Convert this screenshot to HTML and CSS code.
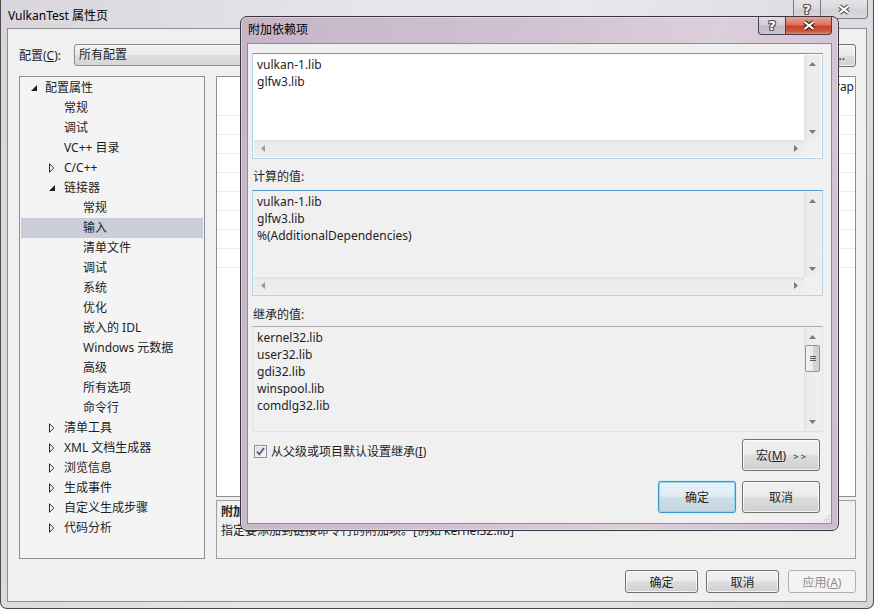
FILE: index.html
```html
<!DOCTYPE html>
<html lang="zh-CN">
<head>
<meta charset="utf-8">
<title>VulkanTest 属性页</title>
<link rel="stylesheet" href="styles.css">
</head>
<body>
<div class="desk">
  <section class="window main-win">
    <header class="titlebar">
      <span class="title">VulkanTest 属性页</span>
      <div class="caps inactive">
        <span class="cap help"><span class="q">?</span></span>
        <span class="cap close">
          <svg width="14" height="11" viewBox="0 0 14 11"><path d="M2.5 2 L11.5 9 M11.5 2 L2.5 9" stroke="#5a5a5a" stroke-width="4.2"/><path d="M2.5 2 L11.5 9 M11.5 2 L2.5 9" stroke="#fff" stroke-width="2.2"/></svg>
        </span>
      </div>
    </header>
    <div class="client">
      <div class="config-row">
        <span class="lbl">配置(<u>C</u>):</span>
        <div class="combo cfg">所有配置</div>
        <span class="lbl plat">平台(<u>P</u>):</span>
        <div class="combo plat-combo">活动(x64)</div>
        <button class="btn mgr">配置管理器(<u>O</u>)...</button>
      </div>
      <div class="main">
        <div class="tree">
          <div class="row l0"><span class="arw"><svg width="6" height="6" viewBox="0 0 6 6"><path d="M6 0 L6 6 L0 6Z" fill="#1e1e1e"/></svg></span>配置属性</div>
          <div class="row l1"><span class="arw"></span>常规</div>
          <div class="row l1"><span class="arw"></span>调试</div>
          <div class="row l1"><span class="arw"></span>VC++ 目录</div>
          <div class="row l1"><span class="arw"><svg width="6" height="10" viewBox="0 0 6 10"><path d="M0.5 0.8 L4.8 5 L0.5 9.2Z" fill="#fff" stroke="#222" stroke-width="1"/></svg></span>C/C++</div>
          <div class="row l1"><span class="arw"><svg width="6" height="6" viewBox="0 0 6 6"><path d="M6 0 L6 6 L0 6Z" fill="#1e1e1e"/></svg></span>链接器</div>
          <div class="row l2"><span class="arw"></span>常规</div>
          <div class="row l2 sel"><span class="arw"></span>输入</div>
          <div class="row l2"><span class="arw"></span>清单文件</div>
          <div class="row l2"><span class="arw"></span>调试</div>
          <div class="row l2"><span class="arw"></span>系统</div>
          <div class="row l2"><span class="arw"></span>优化</div>
          <div class="row l2"><span class="arw"></span>嵌入的 IDL</div>
          <div class="row l2"><span class="arw"></span>Windows 元数据</div>
          <div class="row l2"><span class="arw"></span>高级</div>
          <div class="row l2"><span class="arw"></span>所有选项</div>
          <div class="row l2"><span class="arw"></span>命令行</div>
          <div class="row l1"><span class="arw"><svg width="6" height="10" viewBox="0 0 6 10"><path d="M0.5 0.8 L4.8 5 L0.5 9.2Z" fill="#fff" stroke="#222" stroke-width="1"/></svg></span>清单工具</div>
          <div class="row l1"><span class="arw"><svg width="6" height="10" viewBox="0 0 6 10"><path d="M0.5 0.8 L4.8 5 L0.5 9.2Z" fill="#fff" stroke="#222" stroke-width="1"/></svg></span>XML 文档生成器</div>
          <div class="row l1"><span class="arw"><svg width="6" height="10" viewBox="0 0 6 10"><path d="M0.5 0.8 L4.8 5 L0.5 9.2Z" fill="#fff" stroke="#222" stroke-width="1"/></svg></span>浏览信息</div>
          <div class="row l1"><span class="arw"><svg width="6" height="10" viewBox="0 0 6 10"><path d="M0.5 0.8 L4.8 5 L0.5 9.2Z" fill="#fff" stroke="#222" stroke-width="1"/></svg></span>生成事件</div>
          <div class="row l1"><span class="arw"><svg width="6" height="10" viewBox="0 0 6 10"><path d="M0.5 0.8 L4.8 5 L0.5 9.2Z" fill="#fff" stroke="#222" stroke-width="1"/></svg></span>自定义生成步骤</div>
          <div class="row l1"><span class="arw"><svg width="6" height="10" viewBox="0 0 6 10"><path d="M0.5 0.8 L4.8 5 L0.5 9.2Z" fill="#fff" stroke="#222" stroke-width="1"/></svg></span>代码分析</div>
        </div>
        <div class="right">
          <div class="grid">
            <div class="grow first"><span class="gval">Wrap</span></div>
            <div class="grow"></div>
            <div class="grow"></div>
            <div class="grow"></div>
            <div class="grow"></div>
            <div class="grow"></div>
            <div class="grow"></div>
            <div class="grow"></div>
            <div class="grow"></div>
          </div>
          <div class="desc">
            <div class="dtitle">附加依赖项</div>
            <div class="dtext">指定要添加到链接命令行的附加项。[例如 kernel32.lib]</div>
          </div>
        </div>
      </div>
      <div class="footer">
        <button class="btn fbtn">确定</button>
        <button class="btn fbtn">取消</button>
        <button class="btn fbtn apply" disabled>应用(<u>A</u>)</button>
      </div>
    </div>
  </section>

  <section class="window dialog">
    <header class="titlebar dlg-title">
      <span class="title">附加依赖项</span>
      <div class="caps active">
        <span class="cap help"><span class="q">?</span></span>
        <span class="cap close red">
          <svg width="14" height="11" viewBox="0 0 14 11"><path d="M2.5 2 L11.5 9 M11.5 2 L2.5 9" stroke="#3a2420" stroke-width="4.2"/><path d="M2.5 2 L11.5 9 M11.5 2 L2.5 9" stroke="#fff" stroke-width="2.2"/></svg>
        </span>
      </div>
    </header>
    <div class="client dlg-client">
      <div class="tbox focus white">
        <div class="tb-text">vulkan-1.lib<br>glfw3.lib</div>
        <div class="vsb">
          <span class="sarw"><svg width="7" height="4" viewBox="0 0 7 4"><path d="M3.5 0 L7 4 L0 4Z" fill="#7a7a7a"/></svg></span>
          <span class="sfill"></span>
          <span class="sarw"><svg width="7" height="4" viewBox="0 0 7 4"><path d="M0 0 L7 0 L3.5 4Z" fill="#7a7a7a"/></svg></span>
        </div>
        <div class="hsb">
          <span class="sarw"><svg width="4" height="7" viewBox="0 0 4 7"><path d="M0 3.5 L4 0 L4 7Z" fill="#9a9a9a"/></svg></span>
          <span class="sfill"></span>
          <span class="sarw"><svg width="4" height="7" viewBox="0 0 4 7"><path d="M4 3.5 L0 0 L0 7Z" fill="#7a7a7a"/></svg></span>
        </div>
        <div class="corner"></div>
      </div>
      <div class="dlabel">计算的值:</div>
      <div class="tbox focus">
        <div class="tb-text">vulkan-1.lib<br>glfw3.lib<br>%(AdditionalDependencies)</div>
        <div class="vsb">
          <span class="sarw"><svg width="7" height="4" viewBox="0 0 7 4"><path d="M3.5 0 L7 4 L0 4Z" fill="#7a7a7a"/></svg></span>
          <span class="sfill"></span>
          <span class="sarw"><svg width="7" height="4" viewBox="0 0 7 4"><path d="M0 0 L7 0 L3.5 4Z" fill="#7a7a7a"/></svg></span>
        </div>
        <div class="hsb">
          <span class="sarw"><svg width="4" height="7" viewBox="0 0 4 7"><path d="M0 3.5 L4 0 L4 7Z" fill="#9a9a9a"/></svg></span>
          <span class="sfill"></span>
          <span class="sarw"><svg width="4" height="7" viewBox="0 0 4 7"><path d="M4 3.5 L0 0 L0 7Z" fill="#7a7a7a"/></svg></span>
        </div>
        <div class="corner"></div>
      </div>
      <div class="dlabel second">继承的值:</div>
      <div class="tbox plain single">
        <div class="tb-text">kernel32.lib<br>user32.lib<br>gdi32.lib<br>winspool.lib<br>comdlg32.lib</div>
        <div class="vsb">
          <span class="sarw"><svg width="7" height="4" viewBox="0 0 7 4"><path d="M3.5 0 L7 4 L0 4Z" fill="#7a7a7a"/></svg></span>
          <span class="thumb"><i></i><i></i><i></i></span>
          <span class="sfill"></span>
          <span class="sarw"><svg width="7" height="4" viewBox="0 0 7 4"><path d="M0 0 L7 0 L3.5 4Z" fill="#7a7a7a"/></svg></span>
        </div>
      </div>
      <div class="dlg-row1">
        <label class="chk">
          <span class="box"><svg width="11" height="11" viewBox="0 0 11 11"><path d="M2 5.5 L4.3 8.3 L9 2" fill="none" stroke="#4b5d86" stroke-width="1.8"/></svg></span>
          <span>从父级或项目默认设置继承(<u>I</u>)</span>
        </label>
        <button class="btn dbtn">宏(<u>M</u>) <span class="gg">&gt; &gt;</span></button>
      </div>
      <div class="dlg-row2">
        <button class="btn dbtn default">确定</button>
        <button class="btn dbtn">取消</button>
      </div>
      <span class="grip"><svg width="9" height="9" viewBox="0 0 9 9"><path d="M8 1 L1 8 M8 4 L4 8 M8 7 L7 8" stroke="#9a9a9a" stroke-width="1" stroke-dasharray="1 1"/></svg></span>
    </div>
  </section>
</div>
</body>
</html>
```

FILE: styles.css
```css
* { box-sizing: border-box; }
html, body { margin: 0; padding: 0; }
body {
  width: 874px;
  height: 609px;
  overflow: hidden;
  background: #ffffff;
  font-family: "Noto Sans", "Noto Sans CJK SC", sans-serif;
  font-size: 12px;
  color: #1e1e1e;
}
u { text-decoration: underline; text-underline-offset: 1px; }
button { font: inherit; color: inherit; }

.desk { position: relative; width: 874px; height: 609px; }

/* ---------- generic window frame ---------- */
.window {
  display: flex;
  flex-direction: column;
}
.titlebar {
  display: flex;
  align-items: flex-start;
  justify-content: space-between;
  flex: none;
}
.title { white-space: nowrap; color: #000; }
.caps { display: flex; }
.cap {
  display: flex;
  align-items: center;
  justify-content: center;
  height: 19px;
  border: 1px solid #7b7b82;
  border-top: none;
}
.cap.help { width: 27px; border-radius: 0 0 0 4px; border-right: none; }
.cap.close { width: 48px; border-radius: 0 0 4px 0; }
.q {
  font-family: "DejaVu Sans", sans-serif;
  font-weight: bold;
  font-size: 13px;
  line-height: 13px;
  color: #fff;
  text-shadow: 1px 0 #555, -1px 0 #555, 0 1px #555, 0 -1px #555, 1px 1px #555, -1px -1px #555, 1px -1px #555, -1px 1px #555;
}
.inactive .cap {
  background: linear-gradient(#e6e4e8 0%, #dddade 45%, #d2cfd4 55%, #dcd9de 100%);
}

/* ---------- main window ---------- */
.main-win {
  width: 874px;
  height: 609px;
  padding: 0 6px 6px 6px;
  border: 1px solid #4c4c50;
  border-top: none;
  border-radius: 0 0 7px 7px;
  background: linear-gradient(100deg, #d8d6da 0%, #e6e4e8 35%, #e9e7eb 60%, #d9d6db 100%);
}
.main-win .titlebar { height: 28px; }
.main-win .title { margin: 8px 0 0 1px; line-height: 16px; }
.main-win .caps { margin-right: -1px; }

.client {
  flex: 1;
  border: 1px solid #8e8c93;
  background: #f0f0f0;
  display: flex;
  flex-direction: column;
  padding: 15px 10px 0 11px;
}

.config-row {
  display: flex;
  align-items: center;
  height: 22px;
  flex: none;
}
.lbl { width: 55px; white-space: nowrap; }
.lbl.plat { width: auto; margin: 0 10px 0 24px; }
.combo {
  height: 22px;
  border: 1px solid #8c8c8c;
  border-radius: 3px;
  background: linear-gradient(#f3f3f3 0%, #ececec 50%, #dfdfdf 50%, #d6d6d6 100%);
  padding: 0 4px;
  line-height: 20px;
}
.combo.cfg { width: 340px; }
.combo.plat-combo { width: 200px; }
.btn {
  border: 1px solid #707070;
  border-radius: 3px;
  background: linear-gradient(#f2f2f2 0%, #ebebeb 48%, #dddddd 52%, #cfcfcf 100%);
  box-shadow: inset 0 0 0 1px rgba(255,255,255,0.75);
  padding: 0;
  text-align: center;
  white-space: nowrap;
  cursor: default;
}
.btn.mgr { margin-left: auto; height: 23px; width: 118px; padding-right: 10px; text-align: right; }

.main {
  display: flex;
  gap: 11px;
  margin-top: 10px;
  height: 483px;
  flex: none;
}
.tree {
  width: 186px;
  flex: none;
  border: 1px solid #8b8e96;
  background: #f4f4f4;
  padding: 1px 1px 0 1px;
}
.row {
  height: 20px;
  line-height: 20px;
  display: flex;
  align-items: center;
  white-space: nowrap;
  color: #1e1e1e;
}
.row.l0 { padding-left: 8px; }
.row.l1 { padding-left: 26px; }
.row.l2 { padding-left: 45px; }
.row.sel { background: #cbcdd9; }
.arw {
  width: 17px;
  height: 20px;
  flex: none;
  display: flex;
  align-items: center;
  padding-left: 2px;
}
.l0 .arw { width: 16px; }

.right {
  flex: 1;
  display: flex;
  flex-direction: column;
  gap: 3px;
}
.grid {
  height: 421px;
  border: 1px solid #8b8e96;
  background: #fff;
  overflow: hidden;
}
.grow {
  height: 19px;
  display: flex;
  border-bottom: 1px solid #ececec;
  line-height: 19px;
  white-space: nowrap;
}
.grow.first { height: 39px; }
.gval { flex: 1; text-align: right; padding-right: 1px; }
.desc {
  height: 59px;
  border: 1px solid #a0a0a0;
  background: #f0f0f0;
  padding: 2px 4px;
}
.dtitle { font-weight: bold; line-height: 18px; }
.dtext { line-height: 19px; }

.footer {
  display: flex;
  justify-content: flex-end;
  margin-top: 11px;
  flex: none;
}
.fbtn { width: 73px; height: 23px; margin-left: 8px; }
.fbtn:last-child { width: 68px; margin-left: 9px; }
.fbtn.apply {
  color: #8d8d8d;
  border-color: #adb2b5;
  background: #f4f4f4;
  box-shadow: none;
}

/* ---------- dialog ---------- */
.dialog {
  position: absolute;
  left: 240px;
  top: 16px;
  width: 599px;
  height: 515px;
  padding: 0 6px 6px 6px;
  border: 1px solid #3a3640;
  border-radius: 7px;
  background: linear-gradient(100deg, #c6b5c8 0%, #d0c0d1 40%, #dccfdc 70%, #cdbcce 100%);
  box-shadow: 0 0 0 1px rgba(255,255,255,0.35) inset;
}
.dlg-title { height: 26px; }
.dlg-title .title { margin: 5px 0 0 1px; line-height: 16px; }
.dialog .cap { height: 18px; border-color: #4a3f4c; }
.active .cap.help {
  background: linear-gradient(#e3dce6 0%, #d4ccd8 45%, #c2b8c6 55%, #cfc6d3 100%);
}
.active .cap.close.red {
  width: 47px;
  background: linear-gradient(#e9a396 0%, #d9745f 45%, #c5432c 55%, #cf5a3d 85%, #e08a68 100%);
}

.dlg-client {
  padding: 9px 8px 0 4px;
  position: relative;
}
.tbox {
  height: 106px;
  flex: none;
  border: 1px solid #b6d3ea;
  border-top-color: #5b9bd0;
  padding: 1px;
  background: #f0f0f0;
  display: grid;
  grid-template-columns: 1fr 17px;
  grid-template-rows: 1fr 17px;
}
.tbox.white { background: #fff; }
.tbox.plain {
  border-color: #dfe2e8;
  border-top-color: #abadb3;
}
.tbox.single { grid-template-rows: 1fr; }
.tb-text {
  padding: 1px 0 0 3px;
  line-height: 17px;
  overflow: hidden;
  white-space: nowrap;
  color: #1e1e1e;
}
.vsb {
  display: flex;
  flex-direction: column;
  align-items: center;
  background: linear-gradient(90deg, #e2e2e2 0%, #ececec 25%, #eeeeee 100%);
}
.hsb {
  display: flex;
  align-items: center;
  background: linear-gradient(#e2e2e2 0%, #ececec 25%, #eeeeee 100%);
}
.corner { background: #f0f0f0; }
.sarw { height: 17px; width: 17px; flex: none; display: flex; align-items: center; justify-content: center; }
.sfill { flex: 1; }
.thumb {
  width: 15px;
  height: 27px;
  flex: none;
  border: 1px solid #959595;
  border-radius: 2px;
  background: linear-gradient(90deg, #f2f2f2 0%, #ebebeb 50%, #d6d6d6 51%, #cfcfcf 100%);
  display: flex;
  flex-direction: column;
  align-items: center;
  justify-content: center;
  gap: 1px;
}
.thumb i { display: block; width: 6px; height: 1px; background: #5a5a5a; }

.dlabel { margin: 9px 0 5px 1px; line-height: 17px; }
.dlabel.second { margin: 10px 0 3px 1px; }

.dlg-row1 {
  display: flex;
  justify-content: space-between;
  align-items: flex-start;
  margin-top: 7px;
  padding-right: 3px;
}
.chk { display: flex; align-items: center; gap: 4px; margin: 5px 0 0 2px; line-height: 15px; }
.box {
  width: 13px;
  height: 13px;
  border: 1px solid #8e8f8f;
  background: linear-gradient(135deg, #dcdcdc 0%, #f6f6f6 100%);
  display: flex;
  align-items: center;
  justify-content: center;
  box-shadow: inset 0 0 0 1px #f4f4f4;
}
.dbtn { width: 78px; height: 32px; }
.gg { font-size: 9px; margin-left: 4px; }
.dlg-row2 {
  display: flex;
  justify-content: flex-end;
  gap: 6px;
  margin-top: 10px;
  padding-right: 3px;
}
.dbtn.default {
  border-color: #3c95cf;
  background: linear-gradient(#eaf2f7 0%, #e0ebf1 48%, #cfdde6 52%, #c4d6e2 100%);
  box-shadow: inset 0 0 0 1px #8fd6f3, 0 0 1px #5ab6e6;
}
.grip { position: absolute; right: 0; bottom: 0; width: 9px; height: 9px; display: flex; }
```
